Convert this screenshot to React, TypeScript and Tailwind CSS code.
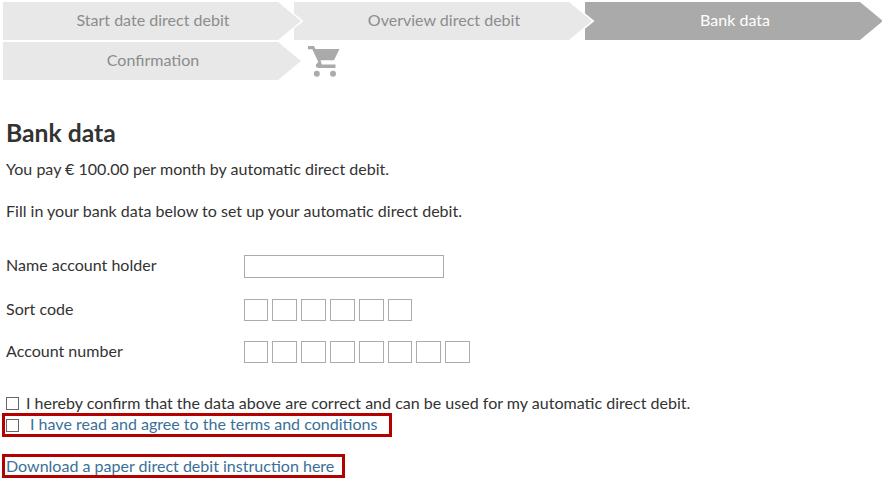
const steps = [
    { label: "Start date direct debit", active: false, z: "z-40" },
    { label: "Overview direct debit", active: false, z: "z-30" },
    { label: "Bank data", active: true, z: "z-20" },
    { label: "Confirmation", active: false, z: "z-10" },
];

const boxCls = "h-[22px] border border-[#aaaaaf] bg-white";

function Step({ label, active, z }: { label: string; active: boolean; z: string }) {
    return (
        <div className={`relative h-[38px] w-[291px] ${z}`}>
            <div className="absolute left-0 top-0 h-full w-[301px] bg-white [clip-path:polygon(0_0,277px_0,300.5px_50%,277px_100%,0_100%)]" />
            <div
                className={`relative flex h-full w-[298px] items-center justify-center pb-[2px] pl-[2px] [clip-path:polygon(0_0,275px_0,298px_50%,275px_100%,0_100%)] ${
                    active ? "bg-[#aaaaaa] text-white" : "bg-[#e8e8e8] text-[#8c8c8c]"
                }`}
            >
                {label}
            </div>
        </div>
    );
}

function CartIcon() {
    return (
        <svg width="32" height="32" viewBox="0 0 32 32" fill="#aaaaaa">
            <path d="M0 0H6L7.5 3H31.5L26 14.3H12.5L13.8 18.5H27.5V22H10.5Q7 21.5 8 18.5L10.3 16L4.3 3.2H0Z" />
            <circle cx="8.8" cy="27.7" r="3" />
            <circle cx="25" cy="27.7" r="3" />
        </svg>
    );
}

function Boxes({ count }: { count: number }) {
    return (
        <div className="flex gap-[4px]">
            {Array.from({ length: count }).map((_, i) => (
                <div key={i} className={`${boxCls} w-[24.82px]`} />
            ))}
        </div>
    );
}

function Row({ label, className, children }: { label: string; className: string; children: React.ReactNode }) {
    return (
        <div className={`flex items-center ${className}`}>
            <div className="w-[237.5px] pb-[2px]">{label}</div>
            {children}
        </div>
    );
}

export default function App() {
    return (
        <div className="h-[481px] w-[882px] overflow-hidden bg-white font-['Lato',sans-serif] text-[16.05px] text-[#333333]">
            <div className="flex flex-wrap gap-y-[2px] pl-[3px] pt-[2px]">
                {steps.map((s) => (
                    <Step key={s.label} {...s} />
                ))}
                <div className="ml-[14px] pt-[4px]">
                    <CartIcon />
                </div>
            </div>

            <div className="px-[6px]">
                <h1 className="mt-[38px] text-[24.7px] font-bold leading-[30px]">Bank data</h1>
                <p className="mt-[9px] leading-[24px]">You pay € 100.00 per month by automatic direct debit.</p>
                <p className="mt-[18px] leading-[24px]">Fill in your bank data below to set up your automatic direct debit.</p>

                <div className="mt-[32px]">
                    <Row label="Name account holder" className="h-[23px]">
                        <div className="h-[23px] w-[200px] border border-[#aaaaaf] bg-white" />
                    </Row>
                    <Row label="Sort code" className="mt-[21px] h-[22px]">
                        <Boxes count={6} />
                    </Row>
                    <Row label="Account number" className="mt-[20px] h-[22px]">
                        <Boxes count={8} />
                    </Row>
                </div>

                <div className="mt-[30px] flex h-[20px] items-center">
                    <span className="mr-[7px] h-[13px] w-[13px] border border-[#666666]" />
                    I hereby confirm that the data above are correct and can be used for my automatic direct debit.
                </div>

                <div className="-ml-[4px] flex h-[24px] w-[390px] items-center border-[3px] border-[#b50000] pb-[2px] pl-[1px] text-[#3a7099]">
                    <span className="mr-[11px] mt-[2px] h-[13px] w-[13px] border border-[#666666]" />
                    I have read and agree to the terms and conditions
                </div>

                <div className="-ml-[4px] mt-[17px] flex h-[24px] w-[343px] items-center border-[3px] border-[#b50000] pl-[1px] text-[#3a7099]">
                    Download a paper direct debit instruction here
                </div>
            </div>
        </div>
    );
}
